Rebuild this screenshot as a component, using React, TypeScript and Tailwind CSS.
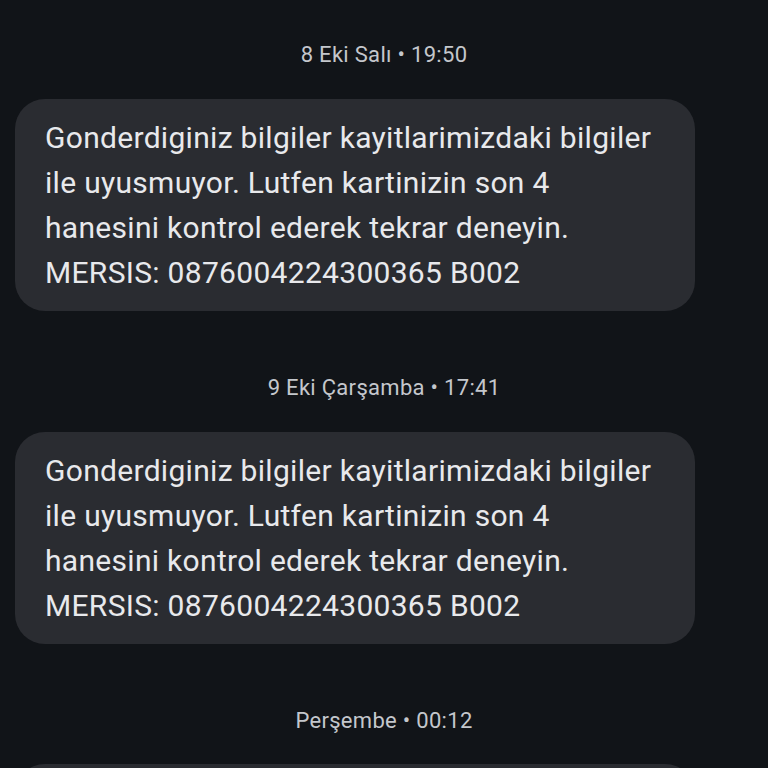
const message =
  "Gonderdiginiz bilgiler kayitlarimizdaki bilgiler ile uyusmuyor. Lutfen kartinizin son 4 hanesini kontrol ederek tekrar deneyin. MERSIS: 0876004224300365 B002";

const lines = [
  "Gonderdiginiz bilgiler kayitlarimizdaki bilgiler",
  "ile uyusmuyor. Lutfen kartinizin son 4",
  "hanesini kontrol ederek tekrar deneyin.",
  "MERSIS: 0876004224300365 B002",
];

function Stamp({ text }: { text: string }) {
  return (
    <div className="flex h-[28px] items-center justify-center text-[22px] tracking-[0.3px] text-[#c4c7cc]">
      {text}
    </div>
  );
}

function Bubble() {
  return (
    <div
      className="ml-[15px] w-[680px] rounded-[30px] bg-[#2a2c31] py-[16px] pl-[30px] pr-[20px] text-[30px] leading-[45px] tracking-[0.3px] text-[#e8e9ec]"
      title={message}
    >
      {lines.map((l) => (
        <div key={l} className="whitespace-nowrap">
          {l}
        </div>
      ))}
    </div>
  );
}

export default function App() {
  const days = ["8 Eki Salı • 19:50", "9 Eki Çarşamba • 17:41"];
  return (
    <div className="h-[768px] w-[768px] overflow-hidden bg-[#111418] pt-[40px] font-['Roboto',sans-serif]">
      {days.map((d) => (
        <div key={d} className="mb-[62px]">
          <Stamp text={d} />
          <div className="mt-[31px]">
            <Bubble />
          </div>
        </div>
      ))}
      <Stamp text="Perşembe • 00:12" />
      <div className="ml-[15px] mt-[30px] h-[100px] w-[680px] rounded-[30px] bg-[#2a2c31]" />
    </div>
  );
}
